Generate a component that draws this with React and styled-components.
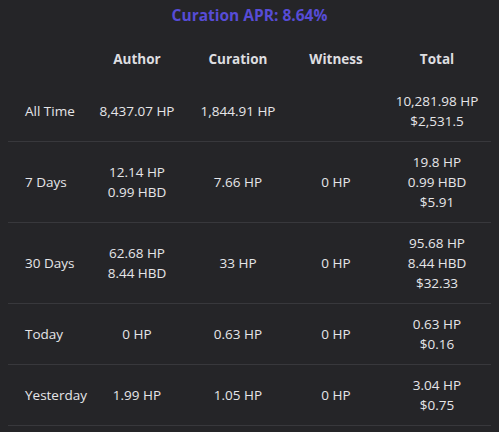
import styled, { createGlobalStyle } from 'styled-components'

const GlobalStyle = createGlobalStyle`
  html, body {
    margin: 0;
    padding: 0;
    background-color: #252528;
  }
  body {
    font-family: "Open Sans", "Noto Sans", sans-serif;
    color: #e6e6e8;
  }
`

const Page = styled.div`
  width: 499px;
  height: 432px;
  overflow: hidden;
  background-color: #252528;
`

const Title = styled.div`
  height: 30px;
  display: flex;
  align-items: center;
  justify-content: center;
  font-size: 15.5px;
  font-weight: 700;
  color: #574cd6;
`

const Table = styled.table`
  margin: 8px 8px 0;
  width: 483px;
  border-collapse: collapse;
  table-layout: fixed;
  font-size: 13.5px;
`

const Th = styled.th`
  height: 41px;
  padding: 0 0 2px;
  text-align: center;
  font-weight: 700;
  color: #dedee0;
  width: ${props => props.w}px;
`

const Tr = styled.tr`
  border-bottom: 1px solid #38383c;
`

const Td = styled.td`
  padding: 10px 0;
  text-align: ${props => props.label ? 'left' : 'center'};
  padding-left: ${props => props.label ? '17px' : '0'};
  line-height: 20px;
  vertical-align: middle;
  white-space: nowrap;
`

const Line = styled.div``

const rows = [
  { label: 'All Time', author: ['8,437.07 HP'], curation: ['1,844.91 HP'], witness: [], total: ['10,281.98 HP', '$2,531.5'] },
  { label: '7 Days', author: ['12.14 HP', '0.99 HBD'], curation: ['7.66 HP'], witness: ['0 HP'], total: ['19.8 HP', '0.99 HBD', '$5.91'] },
  { label: '30 Days', author: ['62.68 HP', '8.44 HBD'], curation: ['33 HP'], witness: ['0 HP'], total: ['95.68 HP', '8.44 HBD', '$32.33'] },
  { label: 'Today', author: ['0 HP'], curation: ['0.63 HP'], witness: ['0 HP'], total: ['0.63 HP', '$0.16'] },
  { label: 'Yesterday', author: ['1.99 HP'], curation: ['1.05 HP'], witness: ['0 HP'], total: ['3.04 HP', '$0.75'] },
]

const Cell = ({ lines }) => (
  <Td>
    {lines.map((l, i) => <Line key={i}>{l}</Line>)}
  </Td>
)

const App = () => {
  return (
    <Page>
      <GlobalStyle />
      <Title>Curation APR: 8.64%</Title>
      <Table>
        <thead>
          <tr>
            <Th w={79}></Th>
            <Th w={100}>Author</Th>
            <Th w={102}>Curation</Th>
            <Th w={94}>Witness</Th>
            <Th w={108}>Total</Th>
          </tr>
        </thead>
        <tbody>
          {rows.map((r) => (
            <Tr key={r.label}>
              <Td label>{r.label}</Td>
              <Cell lines={r.author} />
              <Cell lines={r.curation} />
              <Cell lines={r.witness} />
              <Cell lines={r.total} />
            </Tr>
          ))}
        </tbody>
      </Table>
    </Page>
  )
}

export default App
